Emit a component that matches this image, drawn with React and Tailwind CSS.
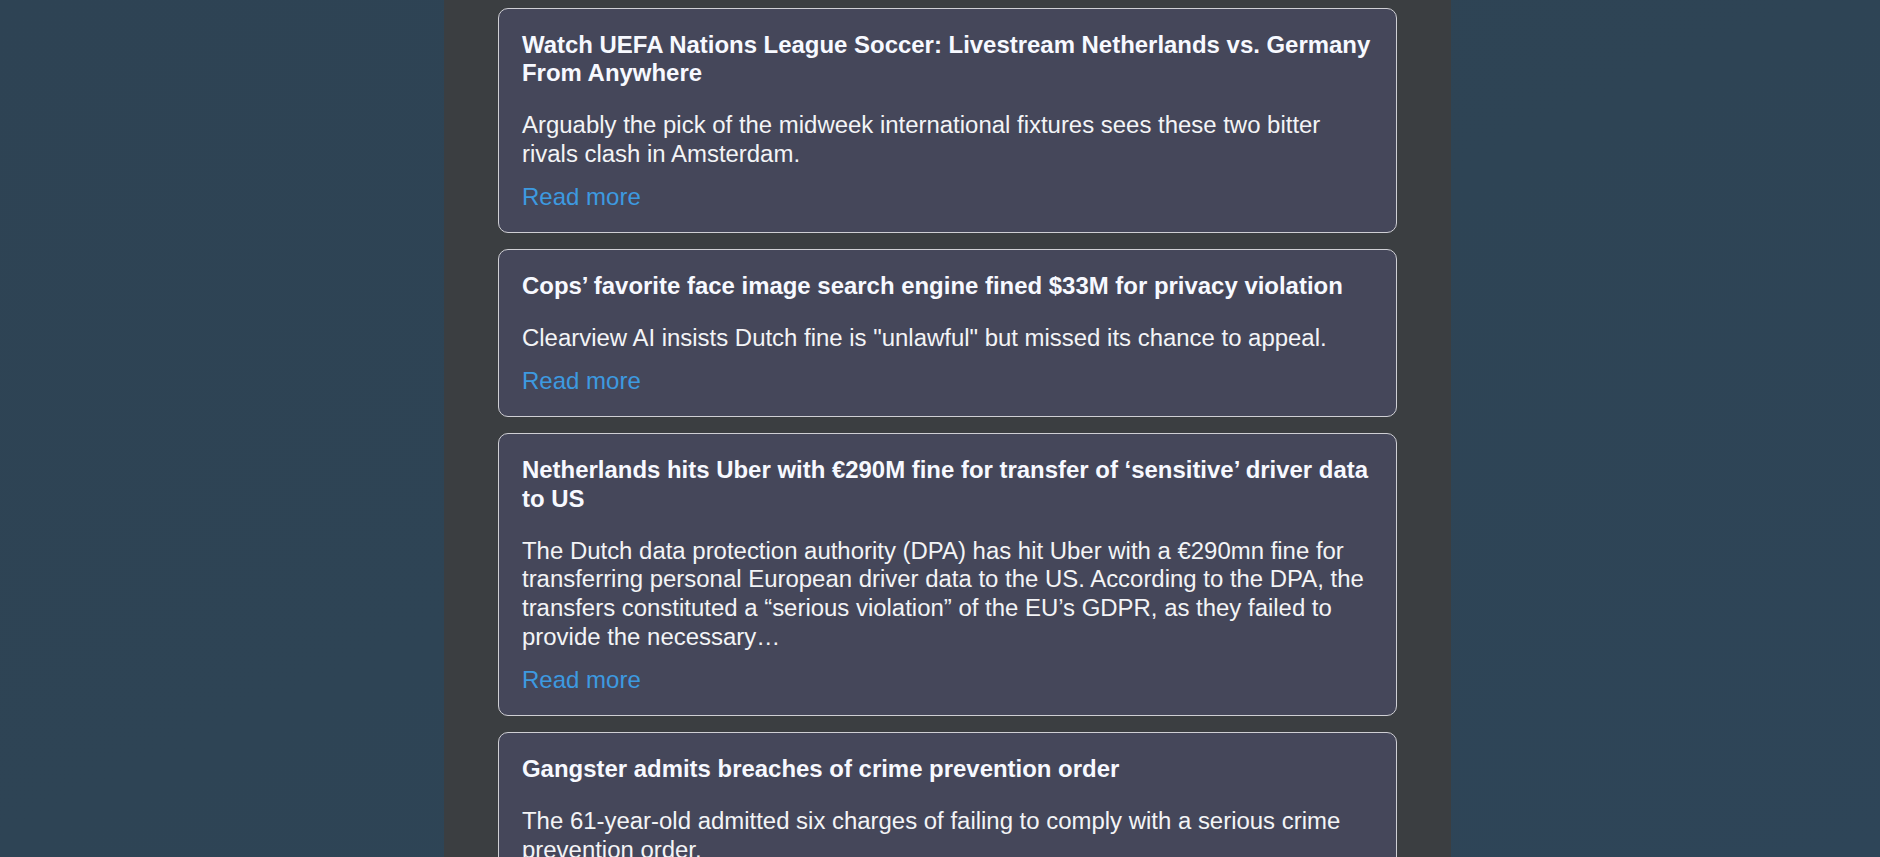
import React from 'react'

const articles = [
  {
    id: 1,
    title: 'Watch UEFA Nations League Soccer: Livestream Netherlands vs. Germany From Anywhere',
    summary: 'Arguably the pick of the midweek international fixtures sees these two bitter rivals clash in Amsterdam.',
  },
  {
    id: 2,
    title: 'Cops\u2019 favorite face image search engine fined $33M for privacy violation',
    summary: 'Clearview AI insists Dutch fine is "unlawful" but missed its chance to appeal.',
  },
  {
    id: 3,
    title: 'Netherlands hits Uber with \u20ac290M fine for transfer of \u2018sensitive\u2019 driver data to US',
    summary:
      'The Dutch data protection authority (DPA) has hit Uber with a \u20ac290mn fine for transferring personal European driver data to the US. According to the DPA, the transfers constituted a \u201cserious violation\u201d of the EU\u2019s GDPR, as they failed to provide the necessary\u2026',
  },
  {
    id: 4,
    title: 'Gangster admits breaches of crime prevention order',
    summary: 'The 61-year-old admitted six charges of failing to comply with a serious crime prevention order.',
  },
]

const NewsCard = ({ article }) => (
  <div className="rounded-[10px] border border-[#cfcfd4] bg-[#45475a] pl-[23px] pr-[20px] pt-[22px] pb-[20.5px]">
    <h2 className="text-[23.95px] leading-[28.4px] font-bold text-[#f7f9ff]">{article.title}</h2>
    <p className="mt-[23.5px] mr-[3px] text-[23.95px] leading-[28.8px] text-[#f3f4f6]">{article.summary}</p>
    <a href="#" className="mt-[14px] block text-[24px] leading-[28.8px] text-[#3d9ae0]">
      Read more
    </a>
  </div>
)

const App = () => {
  return (
    <div
      className="h-screen overflow-hidden bg-gradient-to-br from-[#2e4354] via-[#2e4455] to-[#2e4558]"
      style={{ fontFamily: '"Liberation Sans", Arial, sans-serif' }}
    >
      <div className="ml-[444px] w-[1007px] min-h-full bg-[#3b3e41] px-[54px] pt-[8px]">
        <div className="flex flex-col gap-[16px]">
          {articles.map((a) => (
            <NewsCard key={a.id} article={a} />
          ))}
        </div>
      </div>
    </div>
  )
}

export default App
